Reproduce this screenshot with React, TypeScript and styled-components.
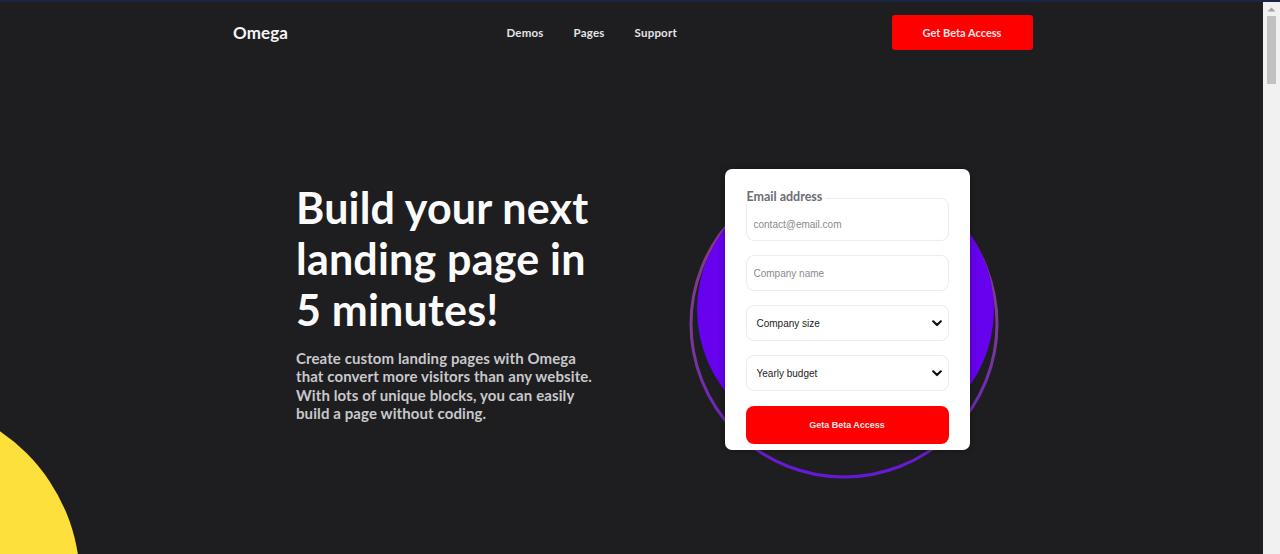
import React from "react";
import styled, { createGlobalStyle } from "styled-components";

const Global = createGlobalStyle`
  html, body { margin: 0; padding: 0; overflow: hidden; }
  body {
    background: #1e1e20;
    font-family: "Lato", "Liberation Sans", sans-serif;
    color: #fff;
  }
  * { box-sizing: border-box; }
`;

const Frame = styled.div`
  height: 100vh;
  display: flex;
  border-top: 2px solid #1b2645;
`;

const Main = styled.div`
  flex: 1;
  position: relative;
  overflow: hidden;
`;

const Scrollbar = styled.div`
  width: 17px;
  flex-shrink: 0;
  background: #f1f1f1;
  display: flex;
  flex-direction: column;
  align-items: center;
`;

const ScrollArrow = styled.div`
  height: 14px;
  display: flex;
  align-items: center;
  justify-content: center;
`;

const Thumb = styled.div`
  width: 9px;
  height: 68px;
  border-radius: 1px;
  background: #c1c1c1;
`;

const Nav = styled.nav`
  width: 802px;
  margin: 0 auto;
  height: 60px;
  display: flex;
  align-items: center;
`;

const Logo = styled.div`
  width: 276px;
  flex-shrink: 0;
  padding-left: 2.5px;
  font-size: 17px;
  font-weight: 700;
  color: #f4f4f4;
  letter-spacing: 0.1px;
`;

const Links = styled.div`
  display: flex;
  gap: 30px;
`;

const NavLink = styled.a`
  font-size: 11.5px;
  font-weight: 700;
  color: #e4e4e8;
  text-decoration: none;
  letter-spacing: 0.2px;
`;

const NavButton = styled.button`
  margin-left: auto;
  width: 141px;
  height: 35px;
  border: none;
  border-radius: 3px;
  background: #ff0000;
  color: #f3e6e6;
  font-family: inherit;
  font-size: 11px;
  font-weight: 700;
`;

const Hero = styled.section`
  width: 739px;
  margin: 105px auto 0;
  padding-left: 34px;
  display: flex;
  justify-content: space-between;
  align-items: flex-start;
`;

const Copy = styled.div`
  width: 310px;
  margin-top: 15px;
`;

const Title = styled.h1`
  margin: 0;
  font-size: 43px;
  line-height: 51px;
  font-weight: 700;
  color: #fbfbfb;
  letter-spacing: 0.2px;
`;

const Lead = styled.p`
  margin: 14px 0 0;
  font-size: 15px;
  line-height: 18.3px;
  font-weight: 700;
  color: #c8c8cc;
  letter-spacing: 0.1px;
`;

const Visual = styled.div`
  position: relative;
  width: 314px;
  height: 314px;
  display: flex;
  justify-content: center;
  align-items: flex-start;
  padding-top: 2px;
  padding-left: 6px;
`;

const Ring = styled.svg`
  position: absolute;
  inset: 0;
`;

const Blob = styled.div`
  position: absolute;
  left: 10px;
  top: 3px;
  width: 297px;
  height: 279px;
  border-radius: 50%;
  background: #6602ee;
`;

const Card = styled.form`
  position: relative;
  z-index: 1;
  width: 245px;
  background: #fff;
  border-radius: 7px;
  padding: 29px 21px 6px;
  display: flex;
  flex-direction: column;
  gap: 14px;
  box-shadow: 0 0 6px rgba(0, 0, 0, 0.35);
`;

const Field = styled.div`
  position: relative;
`;

const Legend = styled.label`
  position: absolute;
  left: 1px;
  top: -9px;
  background: #fff;
  padding-right: 3px;
  font-size: 12.5px;
  font-weight: 700;
  color: #6c6c76;
  line-height: 16px;
`;

const Input = styled.input<{ $tall?: boolean }>`
  width: 100%;
  height: ${(p) => (p.$tall ? 43 : 36)}px;
  border: 1px solid #ececef;
  border-radius: 8px;
  padding: ${(p) => (p.$tall ? "10px 0 0 7px" : "0 0 0 7px")};
  font-family: "Liberation Sans", Arial, sans-serif;
  font-size: 10px;
  color: #222;
  outline: none;
  &::placeholder { color: #8a8a8e; }
`;

const SelectBox = styled.div`
  height: 36px;
  border: 1px solid #ececef;
  border-radius: 8px;
  display: flex;
  align-items: center;
  justify-content: space-between;
  padding: 0 6px 0 10px;
  font-family: "Liberation Sans", Arial, sans-serif;
  font-size: 10px;
  color: #222;
`;

const Submit = styled.button`
  margin-top: 1px;
  height: 38px;
  border: none;
  border-radius: 8px;
  background: #ff0000;
  color: #f6e4e4;
  font-family: "Liberation Sans", Arial, sans-serif;
  font-size: 9px;
  font-weight: 700;
`;

const Sun = styled.div`
  position: absolute;
  left: -284px;
  top: 398px;
  width: 364px;
  height: 364px;
  border-radius: 50%;
  background: #fde03c;
`;

const Chevron = () => (
  <svg width="10" height="7" viewBox="0 0 10 7">
    <path d="M1.2 1.3 L5 5 L8.8 1.3" fill="none" stroke="#111" strokeWidth="2.2" strokeLinecap="round" strokeLinejoin="round" />
  </svg>
);

export default function App() {
  return (
    <>
      <Global />
      <Frame>
        <Main>
          <Sun />
          <Nav>
            <Logo>Omega</Logo>
            <Links>
              <NavLink>Demos</NavLink>
              <NavLink>Pages</NavLink>
              <NavLink>Support</NavLink>
            </Links>
            <NavButton>Get Beta Access</NavButton>
          </Nav>
          <Hero>
            <Copy>
              <Title>
                Build your next
                <br />
                landing page in
                <br />5 minutes!
              </Title>
              <Lead>
                Create custom landing pages with Omega
                <br />
                that convert more visitors than any website.
                <br />
                With lots of unique blocks, you can easily
                <br />
                build a page without coding.
              </Lead>
            </Copy>
            <Visual>
              <Ring width="314" height="314" viewBox="0 0 314 314">
                <defs>
                  <linearGradient id="rg" x1="0" y1="0" x2="0" y2="1">
                    <stop offset="0" stopColor="#8c3a6e" />
                    <stop offset="0.5" stopColor="#7a3c92" />
                    <stop offset="1" stopColor="#6518d8" />
                  </linearGradient>
                </defs>
                <circle cx="157" cy="157" r="153" fill="none" stroke="url(#rg)" strokeWidth="3" />
              </Ring>
              <Blob />
              <Card>
                <Field>
                  <Legend>Email address</Legend>
                  <Input $tall placeholder="contact@email.com" />
                </Field>
                <Input placeholder="Company name" />
                <SelectBox>
                  <span>Company size</span>
                  <Chevron />
                </SelectBox>
                <SelectBox>
                  <span>Yearly budget</span>
                  <Chevron />
                </SelectBox>
                <Submit type="button">Geta Beta Access</Submit>
              </Card>
            </Visual>
          </Hero>
        </Main>
        <Scrollbar>
          <ScrollArrow>
            <svg width="9" height="5" viewBox="0 0 9 5">
              <path d="M0.5 4.5 L4.5 0.5 L8.5 4.5 Z" fill="#a3a3a3" />
            </svg>
          </ScrollArrow>
          <Thumb />
        </Scrollbar>
      </Frame>
    </>
  );
}
